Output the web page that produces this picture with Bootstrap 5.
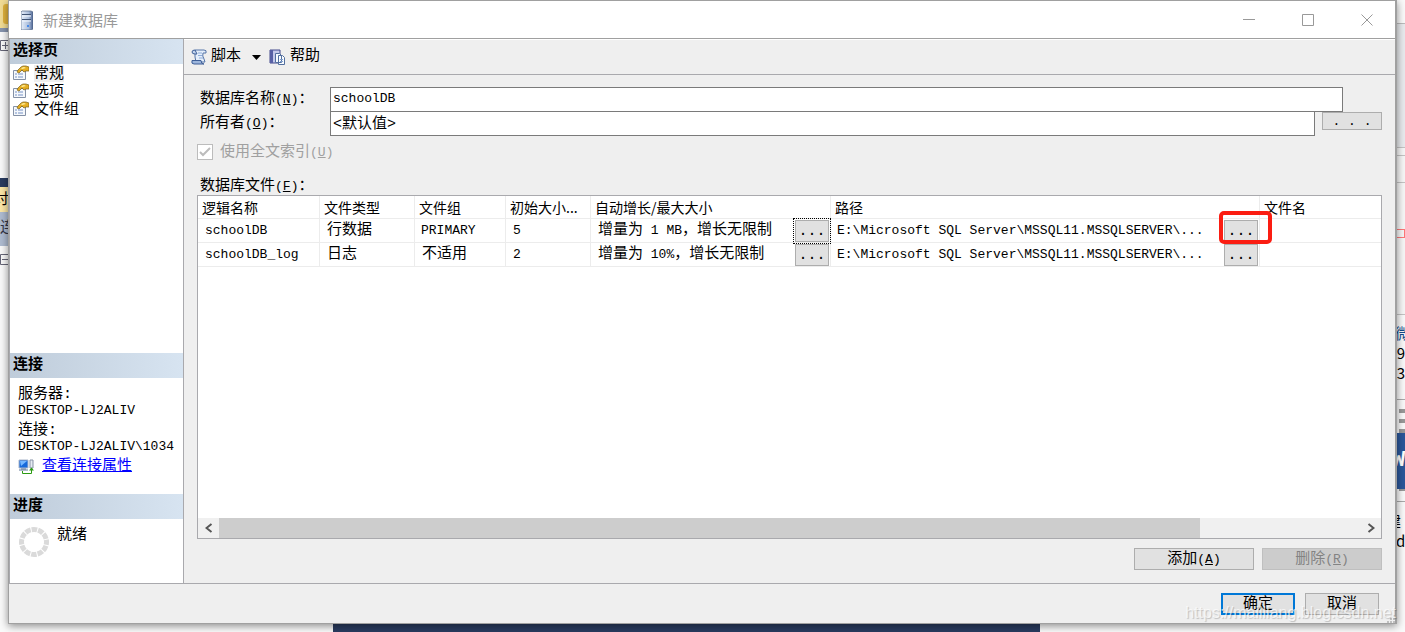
<!DOCTYPE html>
<html lang="zh-CN">
<head>
<meta charset="utf-8">
<meta name="viewport" content="width=device-width, initial-scale=1">
<title>新建数据库</title>
<link href="https://cdn.jsdelivr.net/npm/bootstrap@5.3.0/dist/css/bootstrap.min.css" rel="stylesheet">
<style>
:root{--line:#a9a9ad;--face:#efefef;--btn:#e1e1e1}
body{font-family:"Liberation Mono","Noto Sans CJK SC",monospace;font-size:15px;line-height:18px;color:#000;background:#fafafa}
.desktop{min-height:100vh;padding:0 8px 8px 8px;overflow:hidden}
.edge{position:absolute;z-index:0;overflow:hidden;white-space:nowrap}
.sans{font-family:"Noto Sans CJK SC",sans-serif}
.dialog{z-index:1;min-height:calc(100vh - 8px);background:var(--face);border:1px solid #a0a0a0;border-right-width:2px;box-shadow:0 2px 8px rgba(0,0,0,.45)}
.ltn{font-size:13px}
.titlebar{height:37px;background:#fff;color:#999;padding:0 16px 0 12px;font-family:"Noto Sans CJK SC",sans-serif;line-height:16px}
.titlegap{margin-right:10px}
.winbtns{gap:41px}
.winbtn{border:0;background:none;padding:0;width:18px;height:18px;display:flex}
.main{border-top:1px solid #a0a0a0}
.side{width:175px;background:#fff;border-right:1px solid var(--line);border-left:1px solid var(--line)}
.sidehead{height:25px;padding:3px 3px 2px;margin:0;font-size:15px;line-height:20px;font-weight:700;background:linear-gradient(90deg,#bfccda,#d7e4f1)}
.pages{height:289px}
.pages a{color:#000;text-decoration:none;height:18px;line-height:18px;padding-left:3px}
.pages svg{margin-right:5px}
.pages span{padding-top:1px;height:17px}
.pages .cur{background:var(--face)}
.conn{height:116px;padding:9px 0 0 8px;line-height:16px}
.conn .value{margin-bottom:4px}
.conn a{color:#00f;text-decoration:underline}
.prog{height:64px;padding:8px 9px}
.tools{height:36px;padding:0 7px;border-bottom:1px solid var(--line);border-top:1px solid #fff}
.tools button{border:0;background:none;padding:0;color:#000}
.tools .caret{margin-left:11px}
.pane{padding:12px 13px 12px 13px}
.fieldname{width:133px;padding-left:3px;flex:none}
.field{height:25px;border:1px solid #7a7a7a;border-radius:0;padding:0 2px;background:#fff;color:#000;line-height:20px;min-width:0}
.namefield{margin-right:39px;padding-bottom:2px}
.ownerrow{margin-top:-1px;gap:7px}
.ownerrow .fieldname{margin-right:-7px}
.pushbtn{border:1px solid #adadad;border-radius:0;background:var(--btn);padding:2px 0 0;font-size:15px;line-height:16px;color:#000;height:22px;width:120px}
.pushbtn:disabled{background:#ccc;border-color:#bfbfbf;color:#838383;opacity:1}
.pushbtn.short{width:74px}
.pushbtn.ok{border:2px solid #0078d7}
.pushbtn.browse{width:60px;height:18px;font-size:13px;line-height:14px;margin-top:1px}
.pushbtn.more{width:34px;height:22px;flex:none;font-size:15px}
.focused{outline:1px dotted #000;outline-offset:1px}
.checkrow{height:16px;margin-top:8px;gap:7px;color:#a0a0a0}
.checkrow label{padding-top:2px}
.tick{width:16px;height:16px;margin:0;appearance:none;border:1px solid #bcbcbc;background:#fff url("data:image/svg+xml,%3Csvg xmlns='http://www.w3.org/2000/svg' viewBox='0 0 14 14'%3E%3Cpath d='M2 7l3 3 7-7' fill='none' stroke='%23bcbcbc' stroke-width='2'/%3E%3C/svg%3E")}
.listname{padding-top:18px;padding-left:3px;line-height:17px}
.listing{height:344px;background:#fff;border:1px solid var(--line)}
.files{table-layout:fixed;width:100%;white-space:nowrap;border-collapse:separate;border-spacing:0}
.files th{height:23px;padding:0 4px;font-size:14px;font-weight:400;font-family:"Noto Sans CJK SC",sans-serif}
.files td{height:24px;padding:0 0 0 7px}
.files th,.files td{border-right:1px solid #ececec;border-bottom:1px solid #ececec;line-height:20px}
.files th:last-child,.files td:last-child{border-right:0}
.files td.near{padding-left:6px}
.hostbox{height:23px;padding:1px 1px 0 0;line-height:22px}
.ring{right:-14px;top:-9px;width:53px;height:33px;border:4px solid #fb1d12;border-radius:5px;pointer-events:none}
.scroll{height:20px;background:#f0f0f0}
.scroll button{border:0;background:none;width:21px;padding:0;display:flex;justify-content:center;align-items:center}
.thumb{width:86%;background:#cdcdcd}
.actions{gap:8px;margin-top:9px}
.bottom{border-top:1px solid var(--line);height:40px;padding:9px 16px 0;gap:10px}
.stamp{right:9px;bottom:9px;z-index:3;color:rgba(255,255,255,.7);text-shadow:1px 1px 1px rgba(0,0,0,.2);font:16px/20px "Liberation Sans",sans-serif;pointer-events:none}
.grip{right:0;bottom:0}
</style>
</head>
<body>
<div class="desktop position-relative">
  <div class="edge" style="left:0;top:0;width:9px;height:28px;background:#f2dc94"></div>
  <div class="edge" style="left:3px;top:4px;width:9px;height:20px;background:#e0b23c;border-radius:3px"></div>
  <div class="edge" style="left:0;top:28px;width:9px;height:4px;background:#8794ad"></div>
  <svg class="edge" style="left:0;top:40px" width="11" height="11"><path d="M.5.5h10v10H.5zM2 5.500h7M5.500 2v7" fill="none" stroke="#667"/></svg>
  <div class="edge" style="left:0;top:178px;width:9px;height:9px;background:#293b5f"></div>
  <div class="edge" style="left:0;top:187px;width:9px;height:25px;background:#fce7a6;line-height:27px;text-indent:-6px">讨</div>
  <div class="edge" style="left:0;top:212px;width:9px;height:34px;background:#aebbd0;line-height:34px;color:#334">连</div>
  <svg class="edge" style="left:0;top:254px" width="11" height="11"><path d="M.5.5h10v10H.5zM2 5.500h7" fill="none" stroke="#667"/></svg>
  <div class="edge" style="left:333px;right:365px;bottom:0;height:9px;background:#293b5f"></div>
  <div class="edge" style="right:0;top:23px;width:10px;height:292px;background:#e9ebee;border:solid #bbb;border-width:1px 0"></div>
  <div class="edge" style="right:0;top:147px;width:10px;height:168px;background:#f7f7f7;border:solid #c4c4c4;border-width:1px 0"></div>
  <div class="edge" style="right:0;top:155px;width:10px;height:28px;border:solid #c4c4c4;border-width:1px 0"></div>
  <div class="edge" style="right:0;top:229px;width:10px;height:9px;border:1px solid #f77"></div>
  <div class="edge sans text-end" style="right:0;top:323px;width:10px;line-height:20px;height:60px"><span style="color:#124a8c">微</span><br>9<br>3</div>
  <div class="edge" style="right:0;top:399px;width:10px;height:103px;border:solid #aaa;border-width:1px 0"></div>
  <div class="edge" style="right:0;top:409px;width:6px;height:82px;background:repeating-linear-gradient(#999 0 4px,#fafafa 4px 10px)"></div>
  <div class="edge text-white fw-bold" style="right:0;top:433px;width:10px;height:56px;background:#2b579a;line-height:56px;font-size:22px;text-indent:-3px">W</div>
  <div class="edge sans" style="right:0;top:511px;width:10px;line-height:20px;height:20px;text-indent:-9px">建</div>
  <div class="edge sans" style="right:0;top:531px;width:9px;line-height:20px;height:20px">d</div>

  <div class="dialog position-relative d-flex flex-column">
    <header class="titlebar d-flex align-items-center">
      <svg width="12" height="20" viewBox="0 0 12 20" class="titlegap"><defs><linearGradient id="srv"><stop stop-color="#e8f0fb"/><stop offset=".65" stop-color="#a9bcda"/><stop offset="1" stop-color="#49618f"/></linearGradient></defs><path d="M1 1h9l2 1v17l-2 1H0V2z" fill="url(#srv)" stroke="#556785" stroke-width=".7"/><path d="M1 4.500h9M1 9.500h9" stroke="#405474"/><path d="M1 6h9M1 11h9" stroke="#f5f9ff"/><circle cx="7" cy="16" r="1" fill="#2478ef"/></svg>
      <span class="me-auto">新建数据库</span>
      <div class="winbtns d-flex">
        <button class="winbtn" aria-label="最小化"><svg width="18" height="18"><path d="M0 8.500h12" stroke="#999"/></svg></button>
        <button class="winbtn" aria-label="最大化"><svg width="18" height="18"><path d="M.5 3.500h11v11H.5z" fill="none" stroke="#999"/></svg></button>
        <button class="winbtn" aria-label="关闭"><svg width="18" height="18"><path d="M.5 3.500l11 11m0-11l-11 11" stroke="#999"/></svg></button>
      </div>
    </header>
    <div class="main d-flex flex-grow-1">
      <aside class="side flex-shrink-0">
        <h2 class="sidehead">选择页</h2>
        <nav class="pages">
          <a href="#" class="d-flex align-items-center"><svg width="16" height="16"><use href="#page"/></svg><span class="cur">常规</span></a>
          <a href="#" class="d-flex align-items-center"><svg width="16" height="16"><use href="#page"/></svg><span>选项</span></a>
          <a href="#" class="d-flex align-items-center"><svg width="16" height="16"><use href="#page"/></svg><span>文件组</span></a>
        </nav>
        <h2 class="sidehead">连接</h2>
        <div class="conn">
          <div>服务器:</div><div class="value ltn">DESKTOP-LJ2ALIV</div>
          <div>连接:</div><div class="value ltn">DESKTOP-LJ2ALIV\1034</div>
          <div class="d-flex align-items-center"><svg width="16" height="16" class="me-2"><path d="M1 1h9v8H1z" fill="#1769db" stroke="#aab6ca"/><path d="M2 2h7L3 7z" fill="#75b7ff"/><path d="M1 11h9M3 10h5" stroke="#607696"/><path d="M12 1h3v8h-3z" fill="#e6ebf2" stroke="#8793a6"/><path d="M4.500 12v2.500h9v-4" fill="none" stroke="#2c9b12"/><path d="M11 11.500l2.500-3 2.500 3z" fill="#2c9b12"/></svg><a href="#">查看连接属性</a></div>
        </div>
        <h2 class="sidehead">进度</h2>
        <div class="prog d-flex"><svg width="30" height="30" class="me-2 flex-shrink-0"><circle cx="15" cy="15" r="12.500" fill="none" stroke="#dadada" stroke-width="5" stroke-dasharray="5.545 1" stroke-dashoffset="2.770"/></svg><span>就绪</span></div>
      </aside>
      <main class="flex-grow-1">
        <div class="tools d-flex align-items-center">
          <button class="d-flex align-items-center"><svg width="16" height="16" class="me-1"><path d="M4 1h9q3 0 2 3h-3q-1 3 1 6l1 3H5L4 8z" fill="#e4eefb" stroke="#5474a8"/><path d="M4 1Q1 1 1 3t3 2h2L5 3z" fill="#c2d4ee" stroke="#3e5f98"/><path d="M1 11.500h9q0 3.500 3 3.500H3q-3 0-2-3.500z" fill="#9db6dc" stroke="#3e5f98"/><path d="M7 4h4M7 6.500h4M8 9h4" stroke="#8fadd9"/></svg>脚本<svg width="9" height="5" class="caret"><path d="M0 0h9L4.500 5z"/></svg></button>
          <button class="d-flex align-items-center ms-2"><svg width="17" height="17" class="me-1"><path d="M1 1h10v13H1z" fill="#c5c9eb" stroke="#454b8d"/><path d="M1 1h3v13H1z" fill="#5860a5"/><path d="M6.500 4.500h4l2 2v7h-6zM9.500 6.500h4l2 2v7h-6z" fill="#f7fbff" stroke="#536f9f"/><path d="M11 10.500h3M11 12.500h3" stroke="#7f9dcb"/></svg>帮助</button>
        </div>
        <div class="pane">
          <div class="d-flex align-items-center">
            <label class="fieldname" for="dbname">数据库名称<span class="ltn">(<u>N</u>)</span>：</label>
            <input id="dbname" class="field ltn namefield flex-grow-1" value="schoolDB">
          </div>
          <div class="ownerrow d-flex align-items-start">
            <label class="fieldname pt-1" for="owner">所有者<span class="ltn">(<u>O</u>)</span>：</label>
            <input id="owner" class="field flex-grow-1 pb-1" value="&lt;默认值&gt;">
            <button class="pushbtn browse">. . .</button>
          </div>
          <div class="checkrow d-flex align-items-center">
            <input class="tick" type="checkbox" id="fulltext" checked disabled>
            <label for="fulltext">使用全文索引<span class="ltn">(<u>U</u>)</span></label>
          </div>
          <div class="listname" id="filesname">数据库文件<span class="ltn">(<u>F</u>)</span>：</div>
          <div class="listing d-flex flex-column justify-content-between">
            <table class="files" aria-labelledby="filesname">
              <colgroup><col style="width:122px"><col style="width:95px"><col style="width:91px"><col style="width:85px"><col style="width:240px"><col style="width:429px"><col></colgroup>
              <thead><tr><th>逻辑名称</th><th>文件类型</th><th>文件组</th><th>初始大小...</th><th>自动增长/最大大小</th><th>路径</th><th>文件名</th></tr></thead>
              <tbody>
                <tr>
                  <td class="ltn">schoolDB</td><td>行数据</td><td class="ltn near">PRIMARY</td><td class="ltn">5</td>
                  <td><div class="hostbox d-flex justify-content-between"><span>增量为<span class="ltn"> 1 MB</span>，增长无限制</span><button class="pushbtn more focused">...</button></div></td>
                  <td class="ltn near"><div class="hostbox d-flex justify-content-between"><span>E:\Microsoft SQL Server\MSSQL11.MSSQLSERVER\...</span><span class="position-relative d-flex"><button class="pushbtn more">...</button><span class="ring position-absolute"></span></span></div></td>
                  <td></td>
                </tr>
                <tr>
                  <td class="ltn">schoolDB_log</td><td>日志</td><td>不适用</td><td class="ltn">2</td>
                  <td><div class="hostbox d-flex justify-content-between"><span>增量为<span class="ltn"> 10%</span>，增长无限制</span><button class="pushbtn more">...</button></div></td>
                  <td class="ltn near"><div class="hostbox d-flex justify-content-between"><span>E:\Microsoft SQL Server\MSSQL11.MSSQLSERVER\...</span><button class="pushbtn more">...</button></div></td>
                  <td></td>
                </tr>
              </tbody>
            </table>
            <div class="scroll d-flex">
              <button aria-label="向左滚动"><svg width="8" height="10"><path d="M6.500 1l-5 4 5 4" fill="none" stroke="#555" stroke-width="2"/></svg></button>
              <div class="flex-grow-1 d-flex"><div class="thumb"></div></div>
              <button aria-label="向右滚动"><svg width="8" height="10"><path d="M1.500 1l5 4-5 4" fill="none" stroke="#555" stroke-width="2"/></svg></button>
            </div>
          </div>
          <div class="actions d-flex justify-content-end">
            <button class="pushbtn">添加<span class="ltn">(<u>A</u>)</span></button>
            <button class="pushbtn" disabled>删除<span class="ltn">(<u>R</u>)</span></button>
          </div>
        </div>
      </main>
    </div>
    <footer class="bottom d-flex justify-content-end">
      <button class="pushbtn short ok">确定</button>
      <button class="pushbtn short">取消</button>
    </footer>
    <svg class="grip position-absolute" width="8" height="8"><path d="M6 0h2v2H6zM3 3h2v2H3zM6 3h2v2H6zM0 6h2v2H0zM3 6h2v2H3zM6 6h2v2H6z" fill="#bfbfbf"/></svg>
  </div>
  <div class="stamp position-absolute">https://mailliang.blog.csdn.net</div>
</div>
<svg width="0" height="0" class="position-absolute"><symbol id="page" viewBox="0 0 16 16"><path d="M.5 5.500h12v9H.5z" fill="#f5f8fc" stroke="#8491a6"/><path d="M2 9h2M2 12h2M5 9h5M5 12h5" stroke="#7792c5"/><path d="M5 5l3-3 2-1h3l3 1v4h-3l-2 1-2-2-3 3-2-1z" fill="#e5ae22" stroke="#79601d" stroke-width=".7"/><path d="M8 3l3-1 2 1-4 1z" fill="#fff0a0"/></symbol></svg>
<script src="https://cdn.jsdelivr.net/npm/bootstrap@5.3.0/dist/js/bootstrap.bundle.min.js"></script>
</body>
</html>
